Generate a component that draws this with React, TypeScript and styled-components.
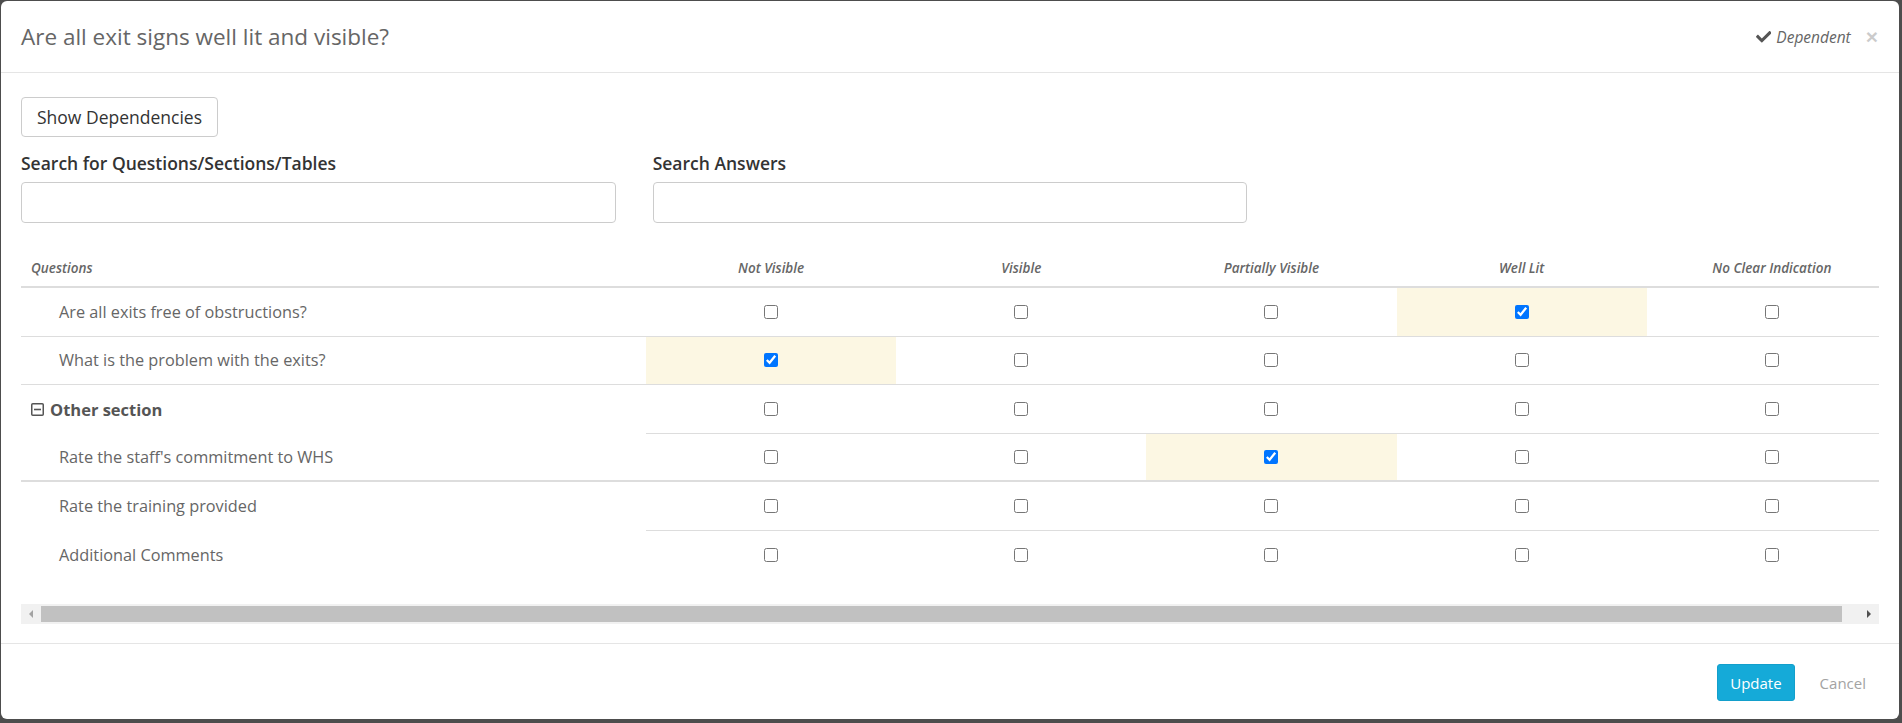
import React from "react";
import styled, { createGlobalStyle } from "styled-components";
import { FaCheck } from "react-icons/fa";

const GlobalStyle = createGlobalStyle`
  * {
    box-sizing: border-box;
  }

  html,
  body {
    margin: 0;
    height: 100%;
    overflow: hidden;
  }

  body {
    background: #4d4d4d;
    font-family: "Open Sans", "Liberation Sans", sans-serif;
    color: #333;
  }
`;

type Line = "none" | "thin" | "thick";

const lineStyle = (line: Line) =>
  line === "thick" ? "2px solid #ddd" : line === "thin" ? "1px solid #ddd" : "0";

const Modal = styled.div`
  margin: 1px 3px 4px 1px;
  height: 718px;
  background: #fff;
  border-radius: 6px;
  display: flex;
  flex-direction: column;
  overflow: hidden;
`;

const Header = styled.header`
  flex: none;
  height: 72px;
  display: flex;
  align-items: center;
  justify-content: space-between;
  padding: 0 21px 0 20px;
  border-bottom: 1px solid #e5e5e5;
`;

const Title = styled.h4`
  margin: 0;
  font-size: 22.5px;
  font-weight: 400;
  line-height: 1.4;
  color: #666;
`;

const Status = styled.div`
  display: flex;
  align-items: center;
  gap: 15px;
`;

const DependentTag = styled.span`
  display: inline-flex;
  align-items: center;
  gap: 5px;
  font-size: 15.5px;
  font-style: italic;
  color: #666;

  svg {
    color: #555;
    font-size: 15.5px;
  }
`;

const CloseButton = styled.button`
  border: 0;
  padding: 0;
  background: none;
  font-family: "Liberation Sans", sans-serif;
  font-size: 21px;
  font-weight: 700;
  line-height: 1;
  color: #000;
  opacity: 0.2;
  cursor: pointer;
`;

const Body = styled.div`
  flex: 1;
  display: flex;
  flex-direction: column;
  padding: 24px 20px 19px;
  min-height: 0;
`;

const DefaultButton = styled.button`
  align-self: flex-start;
  height: 40px;
  padding: 0 15px;
  border: 1px solid #ccc;
  border-radius: 4px;
  background: #fff;
  font-family: inherit;
  font-size: 17.5px;
  color: #333;
  cursor: pointer;
`;

const SearchGrid = styled.div`
  display: grid;
  grid-template-columns: repeat(3, 1fr);
  column-gap: 37px;
  margin-top: 14px;
`;

const Field = styled.label`
  display: flex;
  flex-direction: column;
  gap: 7px;
`;

const FieldLabel = styled.span`
  font-size: 17.5px;
  font-weight: 600;
  line-height: 24px;
  color: #333;
`;

const TextInput = styled.input`
  height: 41px;
  border: 1px solid #ccc;
  border-radius: 4px;
  padding: 0 12px;
  font-family: inherit;
  font-size: 16px;
`;

const TableScroller = styled.div`
  margin-top: 22px;
  overflow: hidden;
`;

const Table = styled.div`
  width: 1876px;
  padding-bottom: 25px;
`;

const Row = styled.div`
  display: grid;
  grid-template-columns: 625px repeat(5, 250.2px);
`;

const HeadCell = styled.div<{ $center?: boolean }>`
  height: 43px;
  display: flex;
  align-items: flex-end;
  justify-content: ${(p) => (p.$center ? "center" : "flex-start")};
  padding: 0 10px 8px;
  border-bottom: 2px solid #ddd;
  font-size: 13.5px;
  font-style: italic;
  font-weight: 600;
  line-height: 19px;
  color: #666;
`;

const QuestionCell = styled.div<{ $line: Line; $indent: number; $section?: boolean }>`
  height: 48.5px;
  display: flex;
  align-items: center;
  gap: 6px;
  padding-left: ${(p) => p.$indent}px;
  border-bottom: ${(p) => lineStyle(p.$line)};
  font-size: ${(p) => (p.$section ? "16.5px" : "16.3px")};
  font-weight: ${(p) => (p.$section ? 700 : 400)};
  color: ${(p) => (p.$section ? "#555" : "#666")};
`;

const AnswerCell = styled.div<{ $line: Line; $picked: boolean }>`
  height: 48.5px;
  display: flex;
  align-items: center;
  justify-content: center;
  border-bottom: ${(p) => lineStyle(p.$line)};
  background: ${(p) => (p.$picked ? "#fcf7e3" : "transparent")};
`;

const Check = styled.input`
  width: 14px;
  height: 14px;
  margin: 0;
`;

const ScrollBar = styled.div`
  flex: none;
  height: 20px;
  display: flex;
  background: #f1f1f1;
`;

const ScrollArrow = styled.div<{ $dir: "left" | "right"; $disabled?: boolean }>`
  width: 20px;
  display: flex;
  align-items: center;
  justify-content: center;

  &::before {
    content: "";
    border-top: 4px solid transparent;
    border-bottom: 4px solid transparent;
    ${(p) =>
      p.$dir === "left"
        ? `border-right: 4px solid ${p.$disabled ? "#a3a3a3" : "#505050"};`
        : `border-left: 4px solid ${p.$disabled ? "#a3a3a3" : "#505050"};`}
  }
`;

const ScrollTrack = styled.div`
  flex: 1;
  display: flex;
  align-items: center;
`;

const ScrollThumb = styled.div`
  height: 16px;
  background: #c1c1c1;
`;

const Footer = styled.footer`
  flex: none;
  height: 76px;
  display: flex;
  justify-content: flex-end;
  align-items: flex-start;
  gap: 12px;
  padding: 20px 20px 0;
  border-top: 1px solid #e5e5e5;
`;

const FooterButton = styled.button<{ $primary?: boolean }>`
  height: 37px;
  padding: 0 12px;
  border: 1px solid ${(p) => (p.$primary ? "#139fcb" : "transparent")};
  border-radius: 3px;
  background: ${(p) => (p.$primary ? "#15aad8" : "transparent")};
  color: ${(p) => (p.$primary ? "#fff" : "#a3a3a3")};
  font-family: inherit;
  font-size: 15px;
  cursor: pointer;
`;

const SectionToggle = () => (
  <svg width="13" height="13" viewBox="0 0 13 13" aria-hidden>
    <rect x="0.75" y="0.75" width="11.5" height="11.5" fill="none" stroke="#555" strokeWidth="1.5" rx="1" />
    <line x1="3" y1="6.5" x2="10" y2="6.5" stroke="#555" strokeWidth="1.6" />
  </svg>
);

const answers = ["Not Visible", "Visible", "Partially Visible", "Well Lit", "No Clear Indication"];

type Item = {
  label: string;
  section?: boolean;
  questionLine: Line;
  answerLine: Line;
  picked?: number;
};

const items: Item[] = [
  { label: "Are all exits free of obstructions?", questionLine: "thin", answerLine: "thin", picked: 3 },
  { label: "What is the problem with the exits?", questionLine: "thin", answerLine: "thin", picked: 0 },
  { label: "Other section", section: true, questionLine: "none", answerLine: "thin" },
  { label: "Rate the staff's commitment to WHS", questionLine: "thick", answerLine: "thick", picked: 2 },
  { label: "Rate the training provided", questionLine: "none", answerLine: "thin" },
  { label: "Additional Comments", questionLine: "none", answerLine: "none" },
];

export default function App() {
  return (
    <>
      <GlobalStyle />
      <Modal>
        <Header>
          <Title>Are all exit signs well lit and visible?</Title>
          <Status>
            <DependentTag>
              <FaCheck />
              Dependent
            </DependentTag>
            <CloseButton aria-label="Close">×</CloseButton>
          </Status>
        </Header>

        <Body>
          <DefaultButton>Show Dependencies</DefaultButton>

          <SearchGrid>
            <Field>
              <FieldLabel>Search for Questions/Sections/Tables</FieldLabel>
              <TextInput />
            </Field>
            <Field>
              <FieldLabel>Search Answers</FieldLabel>
              <TextInput />
            </Field>
          </SearchGrid>

          <TableScroller>
            <Table>
              <Row>
                <HeadCell>Questions</HeadCell>
                {answers.map((a) => (
                  <HeadCell key={a} $center>
                    {a}
                  </HeadCell>
                ))}
              </Row>

              {items.map((item) => (
                <Row key={item.label}>
                  <QuestionCell $line={item.questionLine} $indent={item.section ? 10 : 38} $section={item.section}>
                    {item.section && <SectionToggle />}
                    {item.label}
                  </QuestionCell>
                  {answers.map((a, i) => (
                    <AnswerCell key={a} $line={item.answerLine} $picked={item.picked === i}>
                      <Check type="checkbox" readOnly checked={item.picked === i} />
                    </AnswerCell>
                  ))}
                </Row>
              ))}
            </Table>
          </TableScroller>

          <ScrollBar>
            <ScrollArrow $dir="left" $disabled />
            <ScrollTrack>
              <ScrollThumb style={{ width: `${(1858 / 1876) * 100}%` }} />
            </ScrollTrack>
            <ScrollArrow $dir="right" />
          </ScrollBar>
        </Body>

        <Footer>
          <FooterButton $primary>Update</FooterButton>
          <FooterButton>Cancel</FooterButton>
        </Footer>
      </Modal>
    </>
  );
}
